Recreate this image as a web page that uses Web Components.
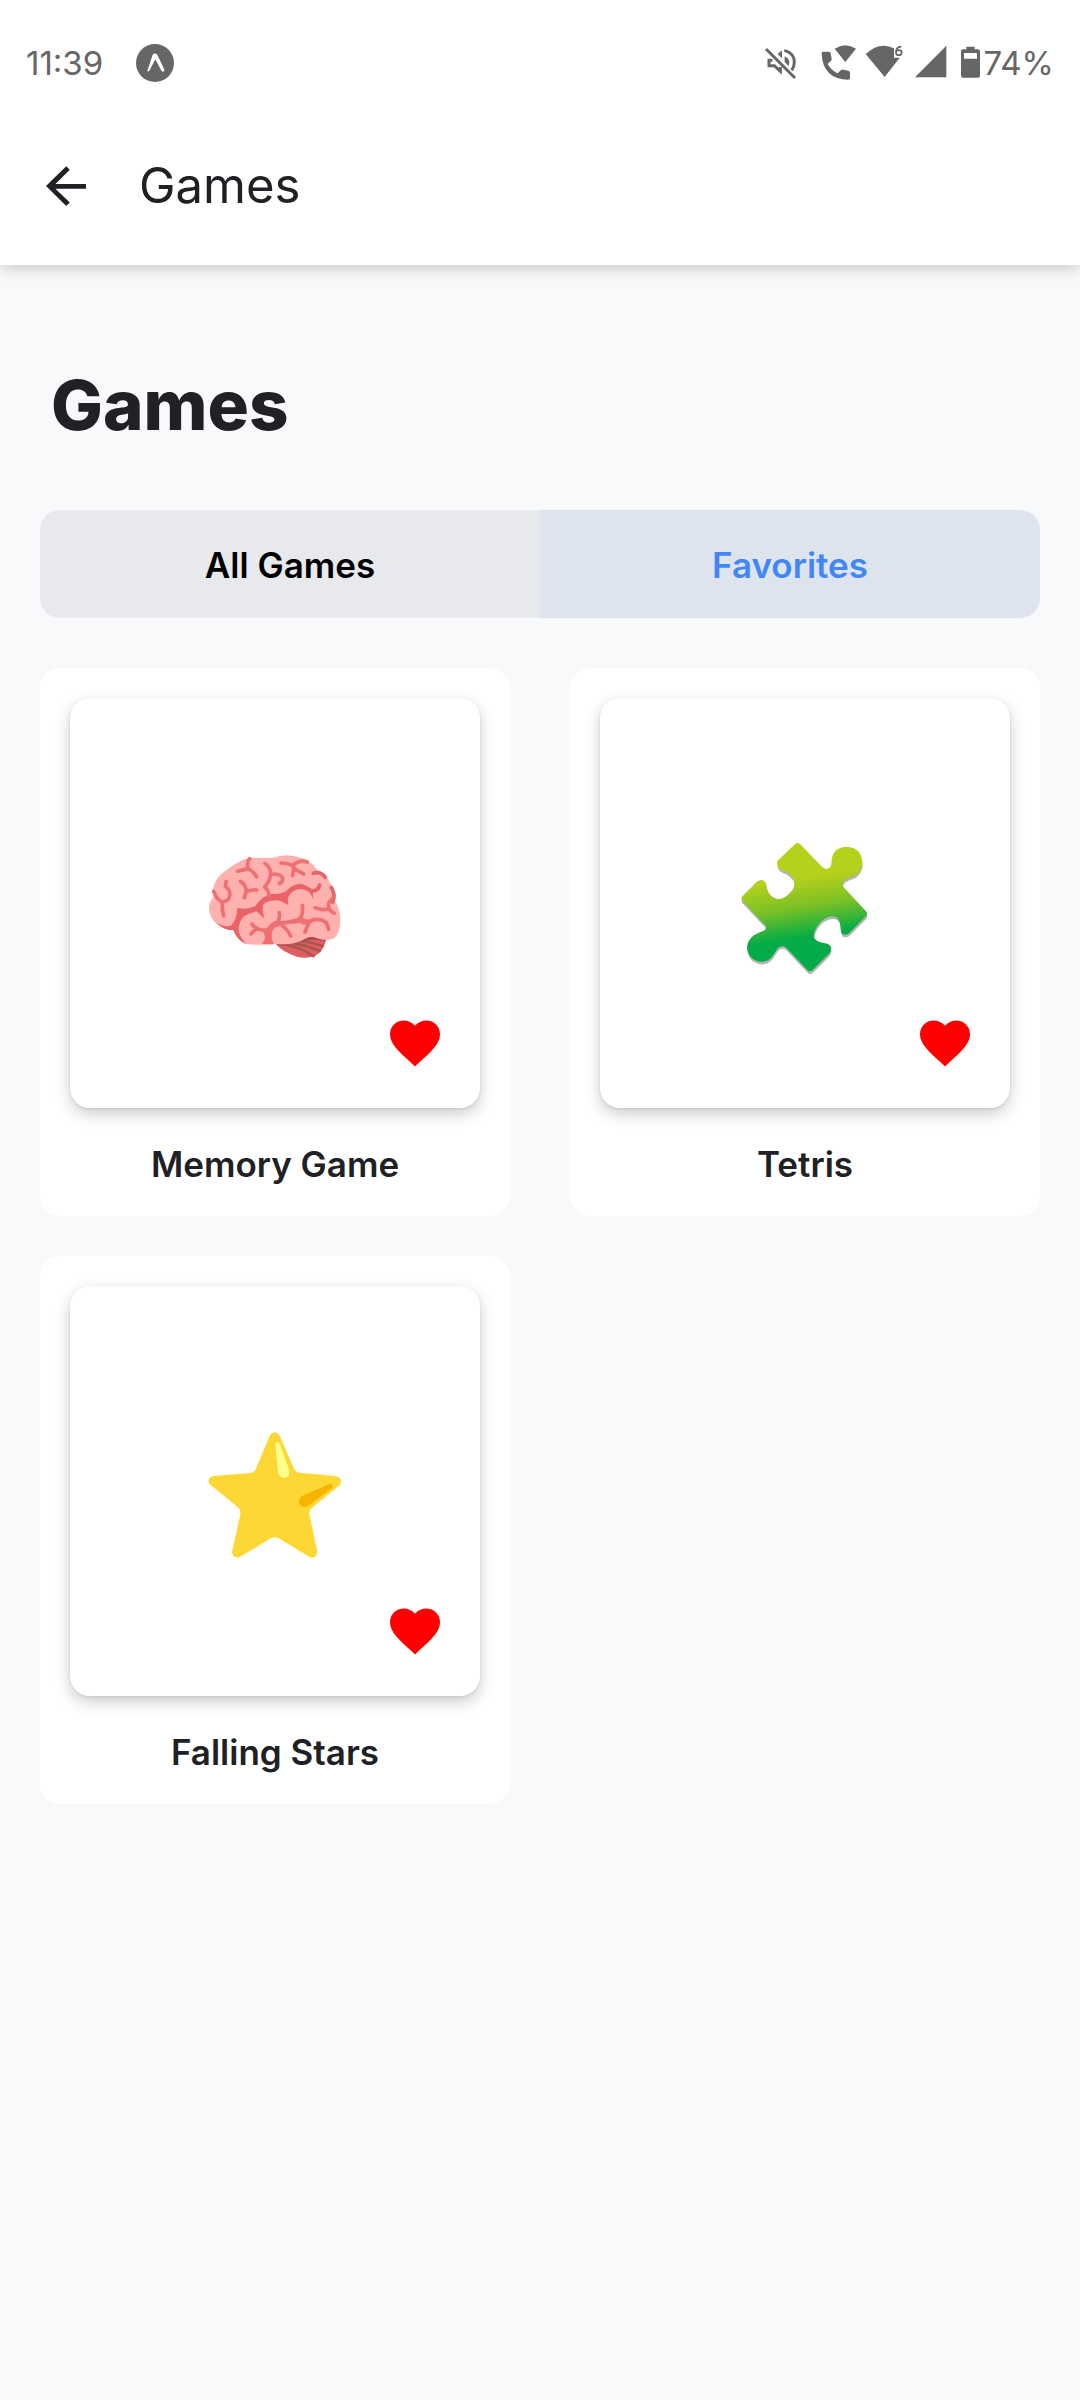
<!DOCTYPE html>
<html lang="en">
<head>
<meta charset="utf-8">
<meta name="viewport" content="width=device-width, initial-scale=1">
<title>Games</title>
<style>
html,body{margin:0;min-height:100%}
body{background:#f8f9fb;color:#202125;font-family:Inter,"Liberation Sans",sans-serif}
</style>
</head>
<body>
<games-page></games-page>

<template id="status-bar">
<style>
:host{display:flex;align-items:center;justify-content:space-between;box-sizing:border-box;height:106px;padding:20px 26px 0 26px;color:#666;font-size:33px;line-height:40px}
div{display:flex;align-items:center}
svg{display:block;height:40px;fill:currentColor}
.left{gap:32px}
.mute{width:32px;margin-right:24px}
.phone{width:36px;margin-right:8px}
.wifi{width:38px;margin-right:12px}
.signal{width:32px;margin-right:14px}
.battery{width:19px;margin-right:4px}
</style>
<div class="left">
<time>11:39</time>
<svg width="40" viewBox="0 0 120 120" aria-hidden="true"><circle cx="60" cy="60" r="57"/><path d="M37 84 53 35Q60 28 67 35L89 82Q87 87 80 85L61 49 43 83Q39 87 37 84Z" fill="#fff"/></svg>
</div>
<div>
<svg class="mute" viewBox="76 40 96 120" aria-hidden="true"><g fill="none" stroke="currentColor"><path d="M79 58 166 145" stroke-width="9"/><path d="M98 92H88V108H104L122 125V112" stroke-width="9"/><path d="M134 62Q164 70 164 98 164 111 156 122" stroke-width="9"/></g><path d="M127 62V86L114 73ZM135 80Q149 87 149 100L147 109 135 97Z"/></svg>
<svg class="phone" viewBox="243 40 108 120" aria-hidden="true"><path d="M249 66H268Q272 66 272 71L275 88Q275 92 272 94L263 103Q273 122 293 131L303 121Q306 119 310 120L325 123Q330 124 330 129V145Q330 150 325 150 248 148 245 72 245 66 249 66ZM284 57Q316 36 348 57L316 97Z"/></svg>
<svg class="wifi" viewBox="373 40 114 120" aria-hidden="true"><path d="M375 73Q417 34 460 56V84H477L432 142Z"/><path d="M482 51Q466 52 466 67" fill="none" stroke="currentColor" stroke-width="5"/><ellipse cx="474.500" cy="69" rx="8.500" ry="7.500" fill="none" stroke="currentColor" stroke-width="5"/></svg>
<svg class="signal" viewBox="523 40 96 120" aria-hidden="true"><path d="M617 48V143H523Z"/></svg>
<svg class="battery" viewBox="660 40 57 120" aria-hidden="true"><path fill-rule="evenodd" d="M676 51H701V59H711Q717 59 717 65V138Q717 144 711 144H666Q660 144 660 138V65Q660 59 666 59H676ZM669 70V87H708V70Z"/></svg>
<span>74%</span>
</div>
</template>

<template id="app-header">
<style>
:host{display:block;background:#fff;box-shadow:0 3px 14px rgba(0,0,0,.2);position:relative}
header{display:flex;align-items:center;gap:43px;height:159px;padding:0 36px}
button{display:block;width:60px;height:60px;padding:0;border:0;background:none;color:inherit}
svg{display:block;width:60px;height:60px;fill:currentColor}
h1{margin:0;font-size:49px;line-height:60px;font-weight:400}
</style>
<status-bar></status-bar>
<header>
<button type="button" aria-label="Back"><svg viewBox="0 0 24 24"><path d="M20 11.200v1.900H7.800l5.700 5.500-1.420 1.420L4 12l8.080-7.920L13.500 5.500 7.800 11.200h12.200z"/></svg></button>
<h1><slot></slot></h1>
</header>
</template>

<template id="filter-tabs">
<style>
:host{display:flex;border-radius:20px;overflow:hidden}
button{flex:1;height:108px;margin:0;padding:2px 0 0;border:0;font:600 35px/40px Inter,"Liberation Sans",sans-serif;color:#000;background:#e8e9ed}
button[aria-pressed="true"]{color:#4287f7;background:#dde4ee}
</style>
<button type="button" aria-pressed="false">All Games</button>
<button type="button" aria-pressed="true">Favorites</button>
</template>

<template id="game-card">
<style>
:host{display:flex;flex-direction:column;gap:36px;padding:30px 30px 32px;border-radius:20px;background:#fff}
.tile{position:relative;display:flex;align-items:center;justify-content:center;aspect-ratio:1;border-radius:20px;background:#fff;box-shadow:0 6px 16px rgba(0,0,0,.2),0 1px 3px rgba(0,0,0,.09)}
button{position:absolute;right:35px;bottom:35px;width:60px;height:60px;padding:0;border:0;background:none;color:red}
button svg{display:block;width:60px;height:60px;fill:currentColor}
h3{margin:0;text-align:center;font-size:35px;line-height:40px;font-weight:600}
</style>
<div class="tile">
<slot name="picture"></slot>
<button type="button" aria-label="Remove from favorites"><svg viewBox="0 0 24 24"><path d="M12 21.350l-1.450-1.320C5.400 15.360 2 12.270 2 8.500 2 5.410 4.420 3 7.500 3c1.740 0 3.410.810 4.500 2.080C13.090 3.810 14.760 3 16.500 3 19.580 3 22 5.410 22 8.500c0 3.770-3.400 6.860-8.550 11.530L12 21.350z"/></svg></button>
</div>
<h3><slot></slot></h3>
</template>

<template id="games-page">
<style>
:host{display:block}
main{display:flex;flex-direction:column;padding:90px 40px 40px}
h2{margin:0 0 55px;padding:0 11px;font-size:69px;line-height:100px;font-weight:800}
section{display:grid;grid-template-columns:1fr 1fr;gap:40px 60px;margin-top:50px}
game-card svg{display:block;width:170px;height:170px}
</style>
<app-header>Games</app-header>
<main>
<h2>Games</h2>
<filter-tabs></filter-tabs>
<section>
<game-card>
<svg slot="picture" viewBox="0 -36 510 510" role="img" aria-label="Brain">
<path fill="#dd5f61" d="M258 343Q280 368 320 380 360 389 385 371 402 358 408 330L365 318Z"/>
<path fill="none" stroke="#ac5250" stroke-width="8" d="M262 342Q320 344 374 380M288 337Q340 342 392 364M320 333Q360 334 400 349M344 328Q372 319 407 331"/>
<path fill="#ab524f" d="M315 340 342 327Q364 315 378 320L408 331 362 330Z"/>
<path fill="#ffb1b0" d="M69 184Q70 150 99 128 122 108 153 92 178 80 248 84 292 68 334 84 365 94 383 121 412 134 420 160 433 180 433 209 448 232 451 262 452 318 425 328 407 334 377 323 360 316 342 328 314 347 258 342 228 347 168 342 142 331 130 300 104 300 80 282 59 266 57 234 58 216 70 202Z"/>
<path fill="#e96265" d="M79 278Q106 294 124 286 141 268 142 234 174 240 196 228 215 198 246 191 272 194 288 184 306 163 332 161 352 166 366 178L371 208 358 186Q334 170 312 182 286 198 296 226L270 212Q240 208 221 222 213 234 224 266L200 244Q176 250 160 260 144 280 146 306 154 328 170 343 142 332 130 300 102 302 79 278Z"/>
<g fill="none" stroke-linecap="round" stroke-linejoin="round">
<path stroke="#e96265" stroke-width="11" d="M362 182Q384 186 389 165M370 130Q392 122 406 142M424 172Q438 196 428 216"/>
<g stroke="#ee7072" stroke-width="11">
<path d="M71 184Q83 214 100 216 123 211 119 185 115 176 106 168 106 160 109 154M97 217Q95 240 101 258"/>
<path d="M179 86Q169 96 174 116 160 119 143 124M174 116Q190 123 200 141M151 154Q168 164 169 184 196 177 200 180M169 184 163 203"/>
<path d="M225 101Q240 109 243 132 276 131 278 146 278 159 268 160M242 133Q240 153 224 171 237 182 237 198"/>
<path d="M273 99Q292 98 307 107 331 88 352 96M307 107Q313 119 341 132M311 109 308 136"/>
<path d="M428 205Q418 216 415 223 415 242 433 250M412 237Q392 242 375 233"/>
<path d="M186 282Q191 291 203 296 191 300 183 312M201 296Q219 302 236 302 240 282 263 276 271 263 268 248M235 302 236 337M262 278Q290 292 302 318M265 278Q295 280 330 267 341 248 337 226M330 267Q337 282 356 278 369 265 385 269 411 268 416 298M357 277 345 306"/>
</g>
</g>
<path fill="#ee7072" d="M216 300Q232 296 240 284L270 272 282 288Q252 286 246 306 243 328 252 343L216 342Q234 320 216 300ZM318 268 330 256 346 268 376 270 354 284 334 278 306 282Z"/>
</svg>
Memory Game
</game-card>
<game-card>
<svg slot="picture" viewBox="0 -6 510 510" role="img" aria-label="Puzzle piece">
<defs><linearGradient id="leaf" gradientUnits="userSpaceOnUse" x1="235" y1="175" x2="262" y2="350"><stop offset="0" stop-color="#b5d11b"/><stop offset=".5" stop-color="#78c026"/><stop offset="1" stop-color="#03ac46"/></linearGradient>
<path id="piece" d="M226 71Q233 66 240 72L306 140Q319 153 330 142 335 136 335 122 337 83 379 80 425 82 427 128 424 166 384 174 361 185 371 202L438 274Q444 281 438 288L391 336Q380 348 368 342 362 338 362 323 360 294 346 290 322 284 299 309 280 332 282 351 286 365 310 369 333 371 334 386L329 399 278 450Q270 458 262 450L205 390Q190 370 173 385L158 408Q144 427 120 425 84 419 81 380 84 350 121 336 144 329 136 316L66 241Q62 235 67 229L110 186Q127 173 138 189 142 231 173 237 194 237 213 215 226 203 222 180 214 161 188 151 169 145 172 123Z"/></defs>
<use href="#piece" x="1" y="8" fill="#b3b3b3"/><use href="#piece" fill="url(#leaf)"/>
</svg>
Tetris
</game-card>
<game-card>
<svg slot="picture" viewBox="0 -12 510 510" role="img" aria-label="Star">
<path fill="#fdd835" d="M240 75Q254 58 268 75L313 178Q317 187 328 188L437 198Q461 205 449 226L364 295Q357 301 358 313L382 425Q379 447 360 442L266 385Q254 378 242 385L148 442Q128 446 126 426L151 313Q153 301 144 292L59 223Q49 203 70 198L181 189Q192 188 197 178Z"/>
<path fill="#ffff8d" d="M256 101Q262 92 269 100L297 179Q301 201 282 204 266 202 264 185Z"/>
<path fill="#f4b400" d="M420 222Q431 222 427 233L357 286Q337 298 327 279 325 264 341 255Z"/>
</svg>
Falling Stars
</game-card>
</section>
</main>
</template>

<script>
for (const name of ["status-bar", "app-header", "filter-tabs", "game-card", "games-page"]) {
  customElements.define(name, class extends HTMLElement {
    constructor() {
      super();
      this.attachShadow({ mode: "open" }).append(document.getElementById(name).content.cloneNode(true));
    }
  });
}
</script>
</body>
</html>
